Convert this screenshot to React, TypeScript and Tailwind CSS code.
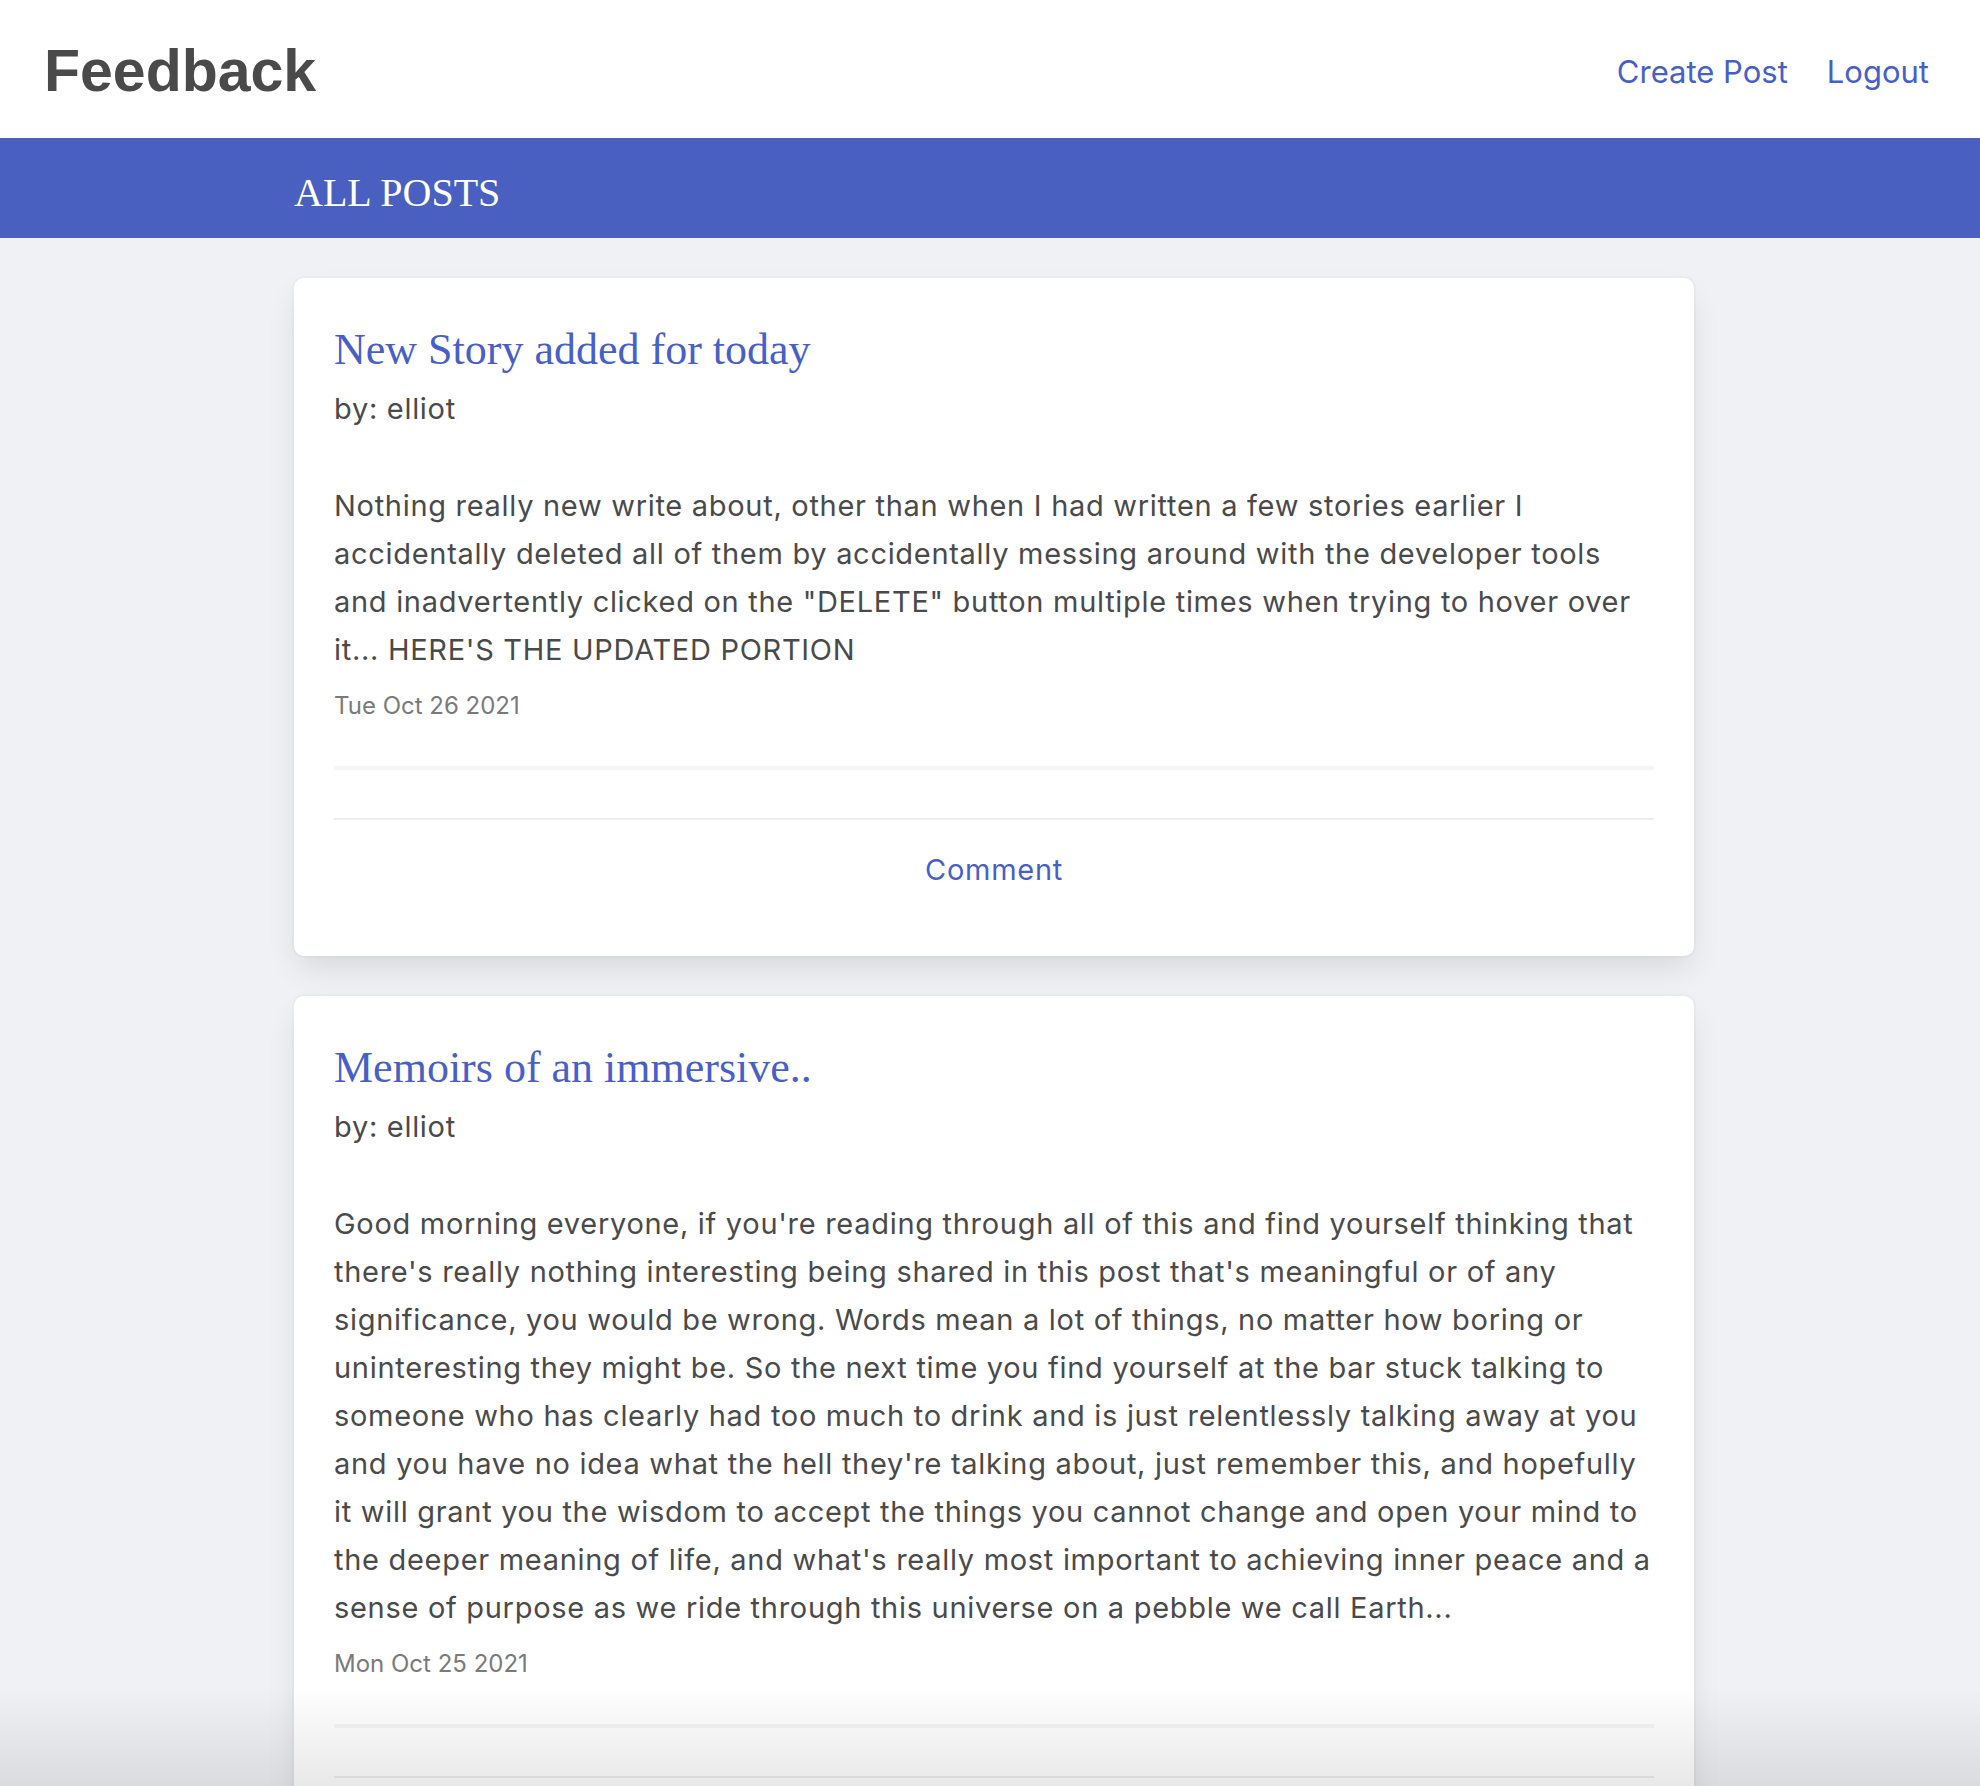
import React from 'react';

const posts = [
  {
    id: 1,
    title: 'New Story added for today',
    author: 'elliot',
    lines: [
      'Nothing really new write about, other than when I had written a few stories earlier I',
      'accidentally deleted all of them by accidentally messing around with the developer tools',
      'and inadvertently clicked on the "DELETE" button multiple times when trying to hover over',
      "it... HERE'S THE UPDATED PORTION",
    ],
    date: 'Tue Oct 26 2021',
  },
  {
    id: 2,
    title: 'Memoirs of an immersive..',
    author: 'elliot',
    lines: [
      "Good morning everyone, if you're reading through all of this and find yourself thinking that",
      "there's really nothing interesting being shared in this post that's meaningful or of any",
      'significance, you would be wrong. Words mean a lot of things, no matter how boring or',
      'uninteresting they might be. So the next time you find yourself at the bar stuck talking to',
      'someone who has clearly had too much to drink and is just relentlessly talking away at you',
      "and you have no idea what the hell they're talking about, just remember this, and hopefully",
      'it will grant you the wisdom to accept the things you cannot change and open your mind to',
      "the deeper meaning of life, and what's really most important to achieving inner peace and a",
      'sense of purpose as we ride through this universe on a pebble we call Earth...',
    ],
    date: 'Mon Oct 25 2021',
  },
];

const sans = "font-['Inter','Noto_Sans',sans-serif]";
const serif = "font-['Liberation_Serif','Times_New_Roman',serif]";

const App: React.FC = () => {
  return (
    <div className={`relative h-[1786px] overflow-hidden bg-[#f0f1f5] ${sans}`}>
      {/* Navbar */}
      <header className="flex h-[138px] items-start justify-between bg-white pl-[44px] pr-[51px]">
        <h1 className="pt-[42px] font-['Liberation_Sans',Arial,sans-serif] text-[59px] font-bold leading-[58px] text-[#4a4a4a]">
          Feedback
        </h1>
        <nav className="flex gap-[39px] pt-[48px] text-[31px] leading-[48px] text-[#485fc7]">
          <a href="#create">Create Post</a>
          <a href="#logout">Logout</a>
        </nav>
      </header>

      {/* Hero bar */}
      <div className="flex h-[100px] items-start bg-[#4a60c0] pl-[294px] pt-[31px]">
        <h2 className={`${serif} text-[40px] leading-[48px] text-white`}>ALL POSTS</h2>
      </div>

      {/* Posts */}
      <main className="flex flex-col gap-[40px] pl-[294px] pr-[286px] pt-[40px]">
        {posts.map((post) => (
          <article
            key={post.id}
            className="rounded-[10px] bg-white px-[40px] pt-[48px] pb-[62px] shadow-[0_16px_32px_-4px_rgba(10,10,10,0.1),0_0_0_2px_rgba(10,10,10,0.02)]"
          >
            <h3 className={`${serif} text-[44px] leading-[48px] text-[#485fc7]`}>{post.title}</h3>
            <p className="mt-[11px] text-[29px] leading-[48px] tracking-[0.7px] text-[#4a4a4a]">
              by: {post.author}
            </p>
            <p className="mt-[49px] text-[29px] leading-[48px] tracking-[0.7px] text-[#4a4a4a]">
              {post.lines.map((line, i) => (
                <span key={i} className="block whitespace-nowrap">
                  {line}
                </span>
              ))}
            </p>
            <p className="mt-[16px] text-[24px] leading-[32px] text-[#7a7a7a]">{post.date}</p>
            <hr className="mt-[44px] h-[4px] border-0 bg-[#f5f5f5]" />
            <div className="mt-[48px] border-t-2 border-[#ededed] pt-[26px] text-center">
              <a href="#comment" className="text-[29px] leading-[48px] tracking-[0.7px] text-[#485fc7]">
                Comment
              </a>
            </div>
          </article>
        ))}
      </main>

      {/* bottom fade */}
      <div className="pointer-events-none absolute inset-x-0 bottom-0 h-[100px] bg-gradient-to-b from-transparent to-[rgba(0,0,0,0.09)]" />
    </div>
  );
};

export default App;
